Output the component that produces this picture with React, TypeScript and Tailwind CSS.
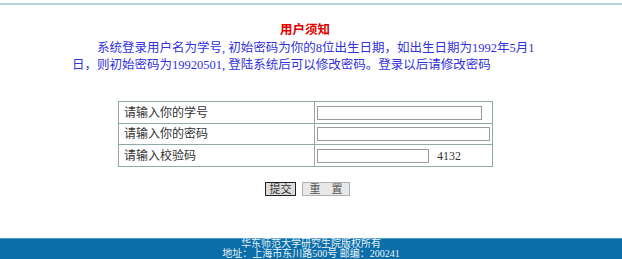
import React from 'react';

const font = "font-['Liberation_Serif','Noto_Sans_CJK_SC',serif]";

export default function App() {
  return (
    <div className={`w-[622px] h-[259px] overflow-hidden bg-white flex flex-col ${font}`}>
      {/* top rule */}
      <div className="mt-[3px] h-[2px] w-full bg-[#b6d4d4]" />

      {/* notice */}
      <h1 className="mt-[17px] pr-[12px] text-center text-[12.5px] leading-[16px] font-bold text-[#e00000]">用户须知</h1>
      <p className="mt-[2px] ml-[72px] w-[470px] indent-[25px] text-[12.5px] leading-[17px] text-[#3232dc]">
        系统登录用户名为学号, 初始密码为你的8位出生日期，如出生日期为1992年5月1日，则初始密码为19920501, 登陆系统后可以修改密码。登录以后请修改密码
      </p>

      {/* login form */}
      <table className="mt-[27px] ml-[118px] w-[375px] border-collapse border border-[#8fa9a9] text-[12px] text-[#333]">
        <tbody>
          <tr className="h-[22px]">
            <td className="w-[196px] border border-[#8fa9a9] pl-[5px] leading-none">请输入你的学号</td>
            <td className="border border-[#8fa9a9] pl-[2px]">
              <input className="block w-[165px] h-[14px] border border-[#9a9a9a] bg-white" />
            </td>
          </tr>
          <tr className="h-[21px]">
            <td className="border border-[#8fa9a9] pl-[5px] leading-none">请输入你的密码</td>
            <td className="border border-[#8fa9a9] pl-[2px]">
              <input type="password" className="block w-[173px] h-[14px] border border-[#9a9a9a] bg-white" />
            </td>
          </tr>
          <tr className="h-[22px]">
            <td className="border border-[#8fa9a9] pl-[5px] leading-none">请输入校验码</td>
            <td className="border border-[#8fa9a9] pl-[2px]">
              <div className="flex items-center gap-[8px]">
                <input className="block w-[112px] h-[14px] border border-[#9a9a9a] bg-white" />
                <span className="text-[12px] text-[#333]">4132</span>
              </div>
            </td>
          </tr>
        </tbody>
      </table>

      {/* buttons */}
      <div className="mt-[15px] flex justify-center gap-[6px] pr-[7px]">
        <button className="w-[31px] h-[14px] border border-[#222] bg-[#dcdcdc] text-[11px] leading-none text-[#333]">提交</button>
        <button className="w-[48px] h-[14px] border border-[#b0b0b0] bg-[#e8e8e8] text-[11px] leading-none text-[#555]">重　置</button>
      </div>

      {/* footer */}
      <footer className="mt-auto h-[21px] border-t border-[#4c9fcf] bg-[#0b6ea8] text-center text-[10px] leading-[10px] text-[#e8f2fa]">
        <div>华东师范大学研究生院版权所有</div>
        <div>地址：上海市东川路500号 邮编：200241</div>
      </footer>
    </div>
  );
}
